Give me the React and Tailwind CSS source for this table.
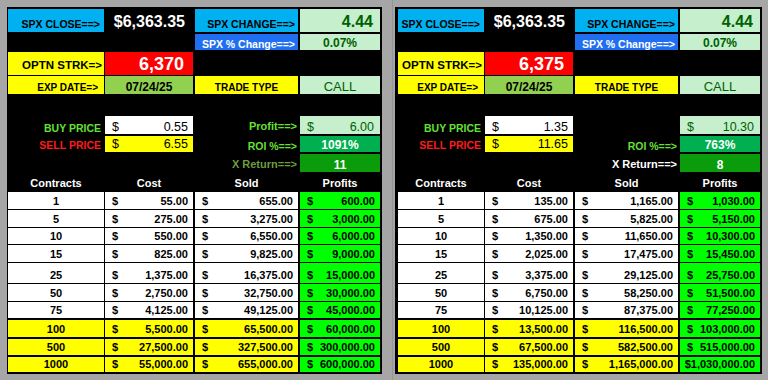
import React from "react";

const C2 = "w-[88px] ml-px";
const C3 = "w-[103px] ml-[2px]";
const C4 = "w-[80px] ml-[2px]";

const HEIGHTS = ["h-[17px]", "h-[17px]", "h-[16px]", "h-[17px]", "h-[20px]", "h-[17px]", "h-[16px]", "h-[17px]", "h-[16px]", "h-[15px]"];
const GAPS = ["mt-px", "mt-px", "mt-px", "mt-px", "mt-px", "mt-px", "mt-px", "mt-[2px]", "mt-[2px]", "mt-[2px]"];

const LEFT = {
  right: false,
  strike: "6,370",
  buy: "0.55",
  sell: "6.55",
  profit: "6.00",
  profitLabel: true,
  roi: "1091%",
  xret: "11",
  xretColor: "text-[#6e9c3f]",
  rows: [
    ["1", "55.00", "655.00", "600.00"],
    ["5", "275.00", "3,275.00", "3,000.00"],
    ["10", "550.00", "6,550.00", "6,000.00"],
    ["15", "825.00", "9,825.00", "9,000.00"],
    ["25", "1,375.00", "16,375.00", "15,000.00"],
    ["50", "2,750.00", "32,750.00", "30,000.00"],
    ["75", "4,125.00", "49,125.00", "45,000.00"],
    ["100", "5,500.00", "65,500.00", "60,000.00"],
    ["500", "27,500.00", "327,500.00", "300,000.00"],
    ["1000", "55,000.00", "655,000.00", "600,000.00"],
  ],
};

const RIGHT = {
  right: true,
  strike: "6,375",
  buy: "1.35",
  sell: "11.65",
  profit: "10.30",
  profitLabel: false,
  roi: "763%",
  xret: "8",
  xretColor: "text-white",
  rows: [
    ["1", "135.00", "1,165.00", "1,030.00"],
    ["5", "675.00", "5,825.00", "5,150.00"],
    ["10", "1,350.00", "11,650.00", "10,300.00"],
    ["15", "2,025.00", "17,475.00", "15,450.00"],
    ["25", "3,375.00", "29,125.00", "25,750.00"],
    ["50", "6,750.00", "58,250.00", "51,500.00"],
    ["75", "10,125.00", "87,375.00", "77,250.00"],
    ["100", "13,500.00", "116,500.00", "103,000.00"],
    ["500", "67,500.00", "582,500.00", "515,000.00"],
    ["1000", "135,000.00", "1,165,000.00", "FULL"],
  ],
};

function Money({ w, bg, value, full }) {
  if (full) {
    return (
      <div className={`${w} ${bg} flex items-end justify-end pr-[5px] pb-[2px] text-[11px] font-bold text-black leading-none`}>
        ${value}
      </div>
    );
  }
  return (
    <div className={`${w} ${bg} flex items-end justify-between pl-[7px] pr-[5px] pb-[2px] text-[11px] font-bold text-black leading-none`}>
      <span>$</span>
      <span>{value}</span>
    </div>
  );
}

function Panel({ d }) {
  const c1 = d.right ? "w-[86px]" : "w-[96px]";
  const pad = d.right ? "pl-[3px] w-[367px] ml-[2px]" : "pl-px w-[375px]";
  return (
    <div className={`mt-[7px] h-[367px] bg-black ${pad} pr-[2px] pt-[2px] flex flex-col shrink-0`}>
      {/* Row 1 */}
      <div className="flex h-[23px]">
        <div className={`${c1} bg-[#00b0f0] flex items-end justify-end pr-[4px] pb-[3px] text-[10.5px] font-bold text-black leading-none`}>
          SPX CLOSE==&gt;
        </div>
        <div className={`${C2} flex items-end justify-end pr-[8px] pb-[2px] text-[16px] font-bold text-white leading-none`}>
          $6,363.35
        </div>
        <div className={`${C3} bg-[#00b0f0] flex items-end justify-end pr-[3px] pb-[3px] text-[10.5px] font-bold text-black leading-none`}>
          SPX CHANGE==&gt;
        </div>
        <div className={`${C4} bg-[#c6efce] flex items-end justify-end pr-[7px] pb-[2px] text-[16px] font-bold text-[#006100] leading-none`}>
          4.44
        </div>
      </div>
      {/* Row 2 */}
      <div className="flex h-[16px] mt-[2px]">
        <div className={`${c1}`} />
        <div className={`${C2}`} />
        <div className={`${C3} bg-[#1f6ff0] flex items-end justify-end pr-[3px] pb-px text-[10.5px] font-bold text-white leading-none`}>
          SPX % Change==&gt;
        </div>
        <div className={`${C4} bg-[#c6efce] flex items-end justify-center pb-px text-[12px] font-bold text-[#006100] leading-none`}>
          0.07%
        </div>
      </div>
      {/* Row 3 */}
      <div className="flex h-[23px] mt-[2px]">
        <div className={`${c1} bg-[#ffff00] flex items-end justify-end pr-[2px] pb-[4px] text-[11.5px] font-bold text-black leading-none`}>
          OPTN STRK=&gt;
        </div>
        <div className={`${C2} bg-[#ff0000] flex items-end justify-end pr-[9px] pb-[2px] text-[18px] font-bold text-white leading-none`}>
          {d.strike}
        </div>
        <div className={`${C3}`} />
        <div className={`${C4}`} />
      </div>
      {/* Row 4 */}
      <div className="flex h-[18px] mt-px">
        <div className={`${c1} bg-[#ffff00] flex items-end justify-end pr-[6px] pb-px text-[10px] font-bold text-black leading-none`}>
          EXP DATE=&gt;
        </div>
        <div className={`${C2} bg-[#92d050] flex items-end justify-center pb-px text-[12px] font-bold text-black leading-none`}>
          07/24/25
        </div>
        <div className={`${C3} bg-[#ffff00] flex items-end justify-center pb-px text-[10px] font-bold text-black leading-none`}>
          TRADE TYPE
        </div>
        <div className={`${C4} bg-[#c6efce] flex items-end justify-center pb-px text-[13px] text-[#006100] leading-none`}>
          CALL
        </div>
      </div>
      <div className="h-[22px]" />
      {/* Buy row */}
      <div className="flex h-[18px]">
        <div className={`${c1} flex items-end justify-end pr-[3px] pb-px text-[10.5px] font-bold text-[#66e033] leading-none`}>
          BUY PRICE
        </div>
        <div className={`${C2} bg-white flex items-end justify-between pl-[7px] pr-[5px] pb-px text-[12.5px] text-black leading-none`}>
          <span>$</span>
          <span>{d.buy}</span>
        </div>
        <div className={`${C3} flex items-end justify-end pr-px pb-[2px] text-[11px] font-bold text-[#66e033] leading-none`}>
          {d.profitLabel ? "Profit==>" : ""}
        </div>
        <div className={`${C4} bg-[#c6efce] flex items-end justify-between pl-[7px] pr-[6px] pb-px text-[12.5px] text-[#006100] leading-none`}>
          <span>$</span>
          <span>{d.profit}</span>
        </div>
      </div>
      {/* Sell row */}
      <div className="flex h-[16px] mt-[2px]">
        <div className={`${c1} flex items-end justify-end pr-[3px] pb-[2px] text-[10.5px] font-bold text-[#ff1a1a] leading-none`}>
          SELL PRICE
        </div>
        <div className={`${C2} bg-[#ffff00] flex items-end justify-between pl-[7px] pr-[5px] pb-[2px] text-[12.5px] text-black leading-none`}>
          <span>$</span>
          <span>{d.sell}</span>
        </div>
        <div className={`${C3} flex items-end justify-end pr-px pb-px text-[10.5px] font-bold text-[#66e033] leading-none`}>
          ROI %==&gt;
        </div>
        <div className={`${C4} bg-[#00b050] flex items-end justify-center pb-px text-[12px] font-bold text-white leading-none`}>
          {d.roi}
        </div>
      </div>
      {/* X Return row */}
      <div className="flex h-[18px] mt-[2px]">
        <div className={`${c1}`} />
        <div className={`${C2}`} />
        <div className={`${C3} flex items-end justify-end pr-px pb-[2px] text-[11px] font-bold ${d.xretColor} leading-none`}>
          X Return==&gt;
        </div>
        <div className={`${C4} bg-[#0a9c0a] flex items-end justify-center pb-px text-[12px] font-bold text-white leading-none`}>
          {d.xret}
        </div>
      </div>
      {/* Header */}
      <div className="flex h-[19px] text-white font-bold text-[11px] leading-none">
        <div className={`${c1} flex items-end justify-center pb-[2px]`}>Contracts</div>
        <div className={`${C2} flex items-end justify-center pb-[2px]`}>Cost</div>
        <div className={`${C3} flex items-end justify-center pb-[2px]`}>Sold</div>
        <div className={`${C4} flex items-end justify-center pb-[2px]`}>Profits</div>
      </div>
      {d.rows.map((r, i) => {
        const bg = i >= 7 ? "bg-[#ffff00]" : "bg-white";
        return (
          <div key={i} className={`flex ${HEIGHTS[i]} ${GAPS[i]}`}>
            <div className={`${c1} ${bg} flex items-end justify-center pb-[2px] text-[11px] font-bold text-black leading-none`}>
              {r[0]}
            </div>
            <Money w={C2} bg={bg} value={r[1]} />
            <Money w={C3} bg={bg} value={r[2]} />
            {r[3] === "FULL" ? (
              <Money w={C4} bg="bg-[#00ff00]" value="1,030,000.00" full />
            ) : (
              <Money w={C4} bg="bg-[#00ff00]" value={r[3]} />
            )}
          </div>
        );
      })}
    </div>
  );
}

export default function App() {
  return (
    <div className="w-[768px] h-[380px] bg-[#a6a6a6] flex pl-[7px] overflow-hidden [font-family:Liberation_Sans,Arial,sans-serif]">
      <Panel d={LEFT} />
      <div className="ml-[10px] w-px bg-[#959595] shrink-0" />
      <Panel d={RIGHT} />
    </div>
  );
}
